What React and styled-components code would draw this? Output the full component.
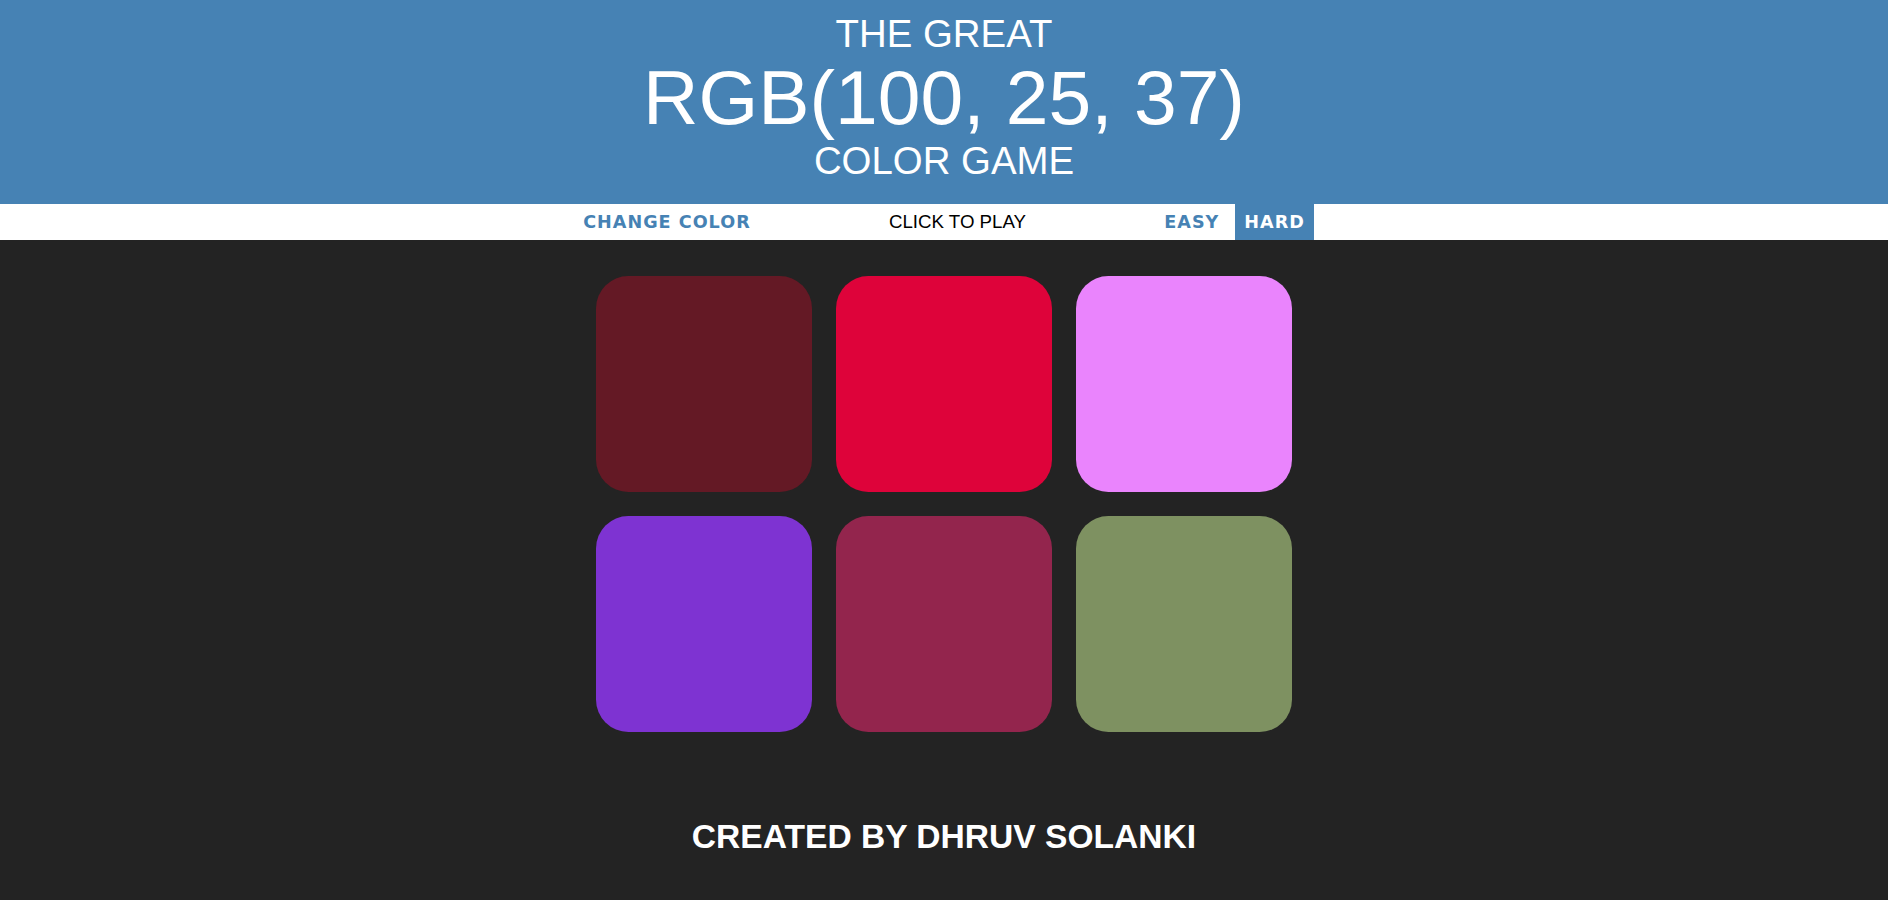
import { useState } from "react";
import styled, { createGlobalStyle } from "styled-components";

const GlobalStyle = createGlobalStyle`
  body {
    margin: 0;
    background-color: #232323;
    font-family: "Liberation Sans", Arial, sans-serif;
  }
`;

const colors = [
  "rgb(100, 25, 37)",
  "rgb(222, 3, 58)",
  "rgb(234, 132, 253)",
  "rgb(126, 51, 210)",
  "rgb(147, 37, 77)",
  "rgb(126, 145, 97)",
];

const App = () => {
  const [mode, setMode] = useState("hard");

  return (
    <>
      <GlobalStyle />
      <Header>
        <HeaderLine>The Great</HeaderLine>
        <ColorDisplay>RGB(100, 25, 37)</ColorDisplay>
        <HeaderLine>Color Game</HeaderLine>
      </Header>
      <Stripe>
        <StripeButton>Change Color</StripeButton>
        <Message>Click to play</Message>
        <StripeButton selected={mode === "easy"} onClick={() => setMode("easy")}>
          Easy
        </StripeButton>
        <StripeButton
          className="hard"
          selected={mode === "hard"}
          onClick={() => setMode("hard")}
        >
          Hard
        </StripeButton>
      </Stripe>
      <Board>
        {colors.map((c, i) => (
          <Square key={i} style={{ backgroundColor: c }} />
        ))}
      </Board>
      <Footer>Created by Dhruv Solanki</Footer>
    </>
  );
};
export default App;

const Header = styled.h1`
  margin: 0;
  padding: 13px 0 22px;
  background-color: steelblue;
  color: #fff;
  text-align: center;
  text-transform: uppercase;
  font-weight: normal;
  font-size: 38.4px;
  line-height: 1.1;
`;

const HeaderLine = styled.span`
  display: block;
`;

const ColorDisplay = styled.span`
  display: block;
  font-size: 200%;
`;

const Stripe = styled.div`
  display: flex;
  justify-content: center;
  align-items: stretch;
  height: 36px;
  background-color: #fff;
`;

const StripeButton = styled.button`
  border: none;
  outline: none;
  margin: 0;
  padding: 0 9px;
  font-family: "DejaVu Sans", Verdana, sans-serif;
  font-weight: 700;
  font-size: 17.6px;
  letter-spacing: 1px;
  text-transform: uppercase;
  color: ${(p) => (p.selected ? "#fff" : "steelblue")};
  background: ${(p) => (p.selected ? "steelblue" : "none")};
  cursor: pointer;

  &.hard {
    margin-left: 7px;
  }
`;

const Message = styled.span`
  display: flex;
  align-items: center;
  justify-content: center;
  width: 377.6px;
  margin: 0 9px;
  font-size: 18.7px;
  color: #000;
  text-transform: uppercase;
`;

const Board = styled.div`
  display: grid;
  grid-template-columns: repeat(3, 216px);
  grid-auto-rows: 216px;
  gap: 24px;
  width: 696px;
  margin: 36px auto 0;
`;

const Square = styled.div`
  border-radius: 15%;
`;

const Footer = styled.footer`
  margin-top: 86px;
  color: #fff;
  text-align: center;
  text-transform: uppercase;
  font-weight: 700;
  font-size: 33.6px;
`;
